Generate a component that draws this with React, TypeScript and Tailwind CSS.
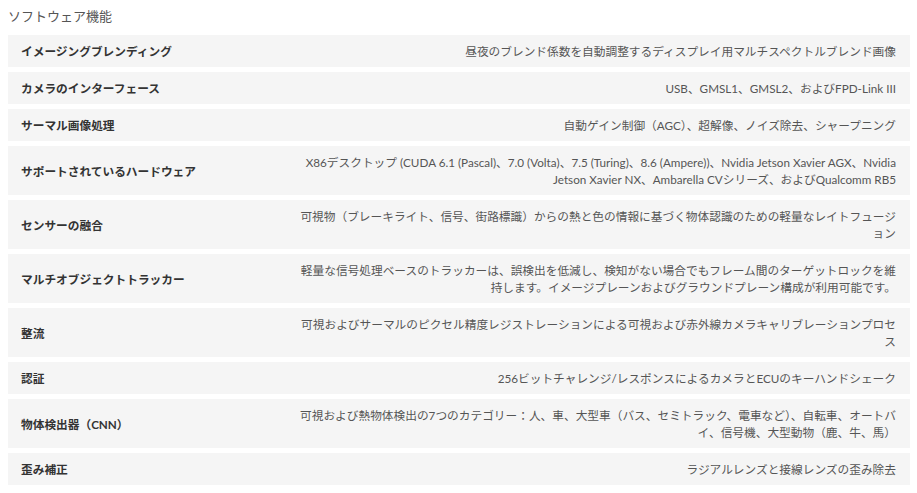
import React from "react";

const rows: { label: string; value: React.ReactNode }[] = [
  { label: "イメージングブレンディング", value: "昼夜のブレンド係数を自動調整するディスプレイ用マルチスペクトルブレンド画像" },
  { label: "カメラのインターフェース", value: "USB、GMSL1、GMSL2、およびFPD-Link III" },
  { label: "サーマル画像処理", value: "自動ゲイン制御（AGC）、超解像、ノイズ除去、シャープニング" },
  {
    label: "サポートされているハードウェア",
    value: "X86デスクトップ (CUDA 6.1 (Pascal)、7.0 (Volta)、7.5 (Turing)、8.6 (Ampere))、Nvidia Jetson Xavier AGX、Nvidia Jetson Xavier NX、Ambarella CVシリーズ、およびQualcomm RB5",
  },
  {
    label: "センサーの融合",
    value: "可視物（ブレーキライト、信号、街路標識）からの熱と色の情報に基づく物体認識のための軽量なレイトフュージョン",
  },
  {
    label: "マルチオブジェクトトラッカー",
    value: "軽量な信号処理ベースのトラッカーは、誤検出を低減し、検知がない場合でもフレーム間のターゲットロックを維持します。イメージプレーンおよびグラウンドプレーン構成が利用可能です。",
  },
  {
    label: "整流",
    value: "可視およびサーマルのピクセル精度レジストレーションによる可視および赤外線カメラキャリブレーションプロセス",
  },
  { label: "認証", value: "256ビットチャレンジ/レスポンスによるカメラとECUのキーハンドシェーク" },
  {
    label: "物体検出器（CNN）",
    value: "可視および熱物体検出の7つのカテゴリー：人、車、大型車（バス、セミトラック、電車など）、自転車、オートバイ、信号機、大型動物（鹿、牛、馬）",
  },
  { label: "歪み補正", value: "ラジアルレンズと接線レンズの歪み除去" },
];

export default function App() {
  return (
    <div
      className="w-[917px] h-[493px] bg-white overflow-hidden"
      style={{ fontFamily: "Lato, 'Noto Sans CJK JP', sans-serif" }}
    >
      <div className="pl-2 pt-2 text-[13px] leading-[17px] text-[#555]">ソフトウェア機能</div>
      <div className="mt-[10px] ml-2 w-[902px] flex flex-col gap-[5px]">
        {rows.map((r) => (
          <div key={r.label} className="flex bg-[#f5f5f5] pt-2 pb-[7px] text-[11.7px] leading-[17px]">
            <div className="w-[284px] shrink-0 pl-[13px] font-bold text-[#333] flex items-center">{r.label}</div>
            <div className="flex-1 pr-[14px] text-right text-[#555]">{r.value}</div>
          </div>
        ))}
      </div>
    </div>
  );
}
